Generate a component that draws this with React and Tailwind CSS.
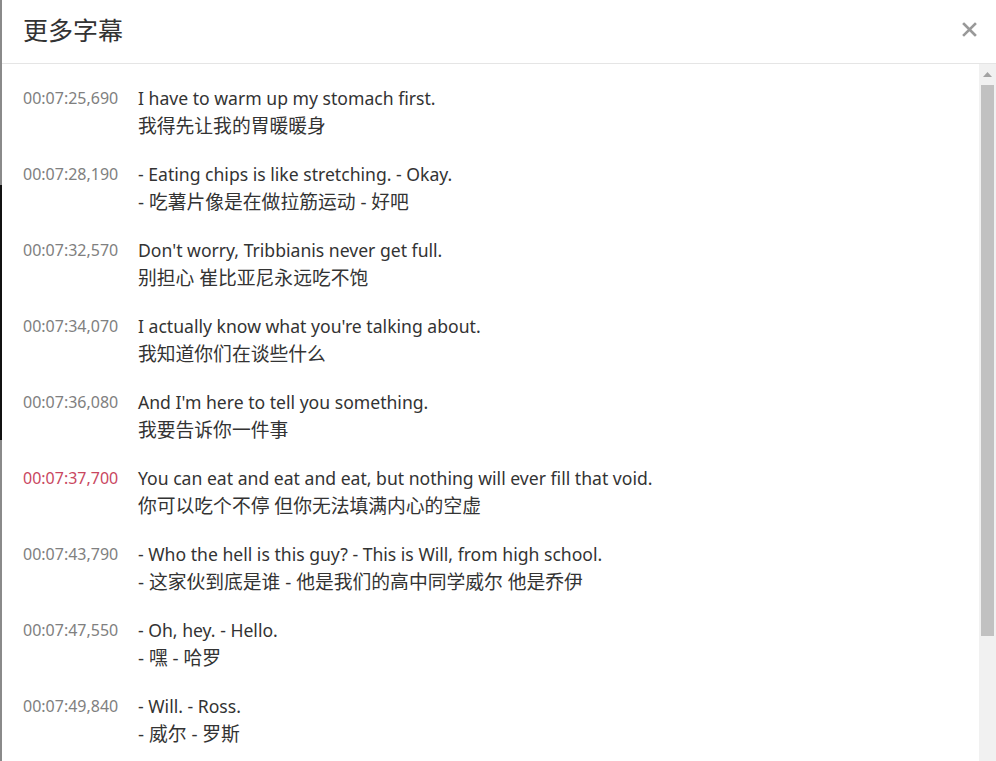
import React from 'react';

const rows = [
    { time: '00:07:25,690', en: 'I have to warm up my stomach first.', zh: '我得先让我的胃暖暖身' },
    { time: '00:07:28,190', en: '- Eating chips is like stretching. - Okay.', zh: '- 吃薯片像是在做拉筋运动 - 好吧' },
    { time: '00:07:32,570', en: "Don't worry, Tribbianis never get full.", zh: '别担心 崔比亚尼永远吃不饱' },
    { time: '00:07:34,070', en: "I actually know what you're talking about.", zh: '我知道你们在谈些什么' },
    { time: '00:07:36,080', en: "And I'm here to tell you something.", zh: '我要告诉你一件事' },
    { time: '00:07:37,700', en: 'You can eat and eat and eat, but nothing will ever fill that void.', zh: '你可以吃个不停 但你无法填满内心的空虚', active: true },
    { time: '00:07:43,790', en: '- Who the hell is this guy? - This is Will, from high school.', zh: '- 这家伙到底是谁 - 他是我们的高中同学威尔 他是乔伊' },
    { time: '00:07:47,550', en: '- Oh, hey. - Hello.', zh: '- 嘿 - 哈罗' },
    { time: '00:07:49,840', en: '- Will. - Ross.', zh: '- 威尔 - 罗斯' },
];

const font = { fontFamily: '"Noto Sans", "Noto Sans CJK SC", sans-serif' };

const App = () => {
    return (
        <div className="flex h-[761px] w-[996px] overflow-hidden bg-white" style={font}>
            {/* backdrop edge */}
            <div className="flex w-[2px] flex-col">
                <div className="h-[185px] bg-[#8a8a8a]" />
                <div className="h-[255px] bg-[#111]" />
                <div className="flex-1 bg-[#8a8a8a]" />
            </div>

            <div className="flex flex-1 flex-col">
                <div className="flex h-[64px] shrink-0 items-center justify-between border-b border-[#e5e5e5] pl-[21px] pr-[19px]">
                    <h4 className="mb-[2px] text-[25px] leading-none text-[#333]">更多字幕</h4>
                    <button type="button" className="mb-[4px] text-[#999]">
                        <svg width="15" height="15" viewBox="0 0 15 15">
                            <path d="M2 2 L13 13 M13 2 L2 13" stroke="currentColor" strokeWidth="2.6" strokeLinecap="square" />
                        </svg>
                    </button>
                </div>

                <div className="flex min-h-0 flex-1">
                    <div className="flex-1 overflow-hidden pl-[21px] pt-[20px]">
                        <div className="flex flex-col gap-[20px]">
                            {rows.map(row => (
                                <div key={row.time} className="flex leading-[28px]">
                                    <div className={`w-[115px] shrink-0 text-[16px] ${row.active ? 'text-[#c9475f]' : 'text-[#808080]'}`}>
                                        {row.time}
                                    </div>
                                    <div className="text-[#333]">
                                        <div className="text-[17.6px]">{row.en}</div>
                                        <div className="text-[18.8px]">{row.zh}</div>
                                    </div>
                                </div>
                            ))}
                        </div>
                    </div>

                    {/* scrollbar */}
                    <div className="flex w-[17px] flex-col bg-[#f1f1f1]">
                        <div className="flex h-[21px] items-center justify-center">
                            <svg width="9" height="5" viewBox="0 0 9 5">
                                <path d="M0 5 L4.5 0 L9 5 Z" fill="#a3a3a3" />
                            </svg>
                        </div>
                        <div className="mx-[2px] h-[551px] bg-[#c1c1c1]" />
                    </div>
                </div>
            </div>
        </div>
    );
};

export default App;
